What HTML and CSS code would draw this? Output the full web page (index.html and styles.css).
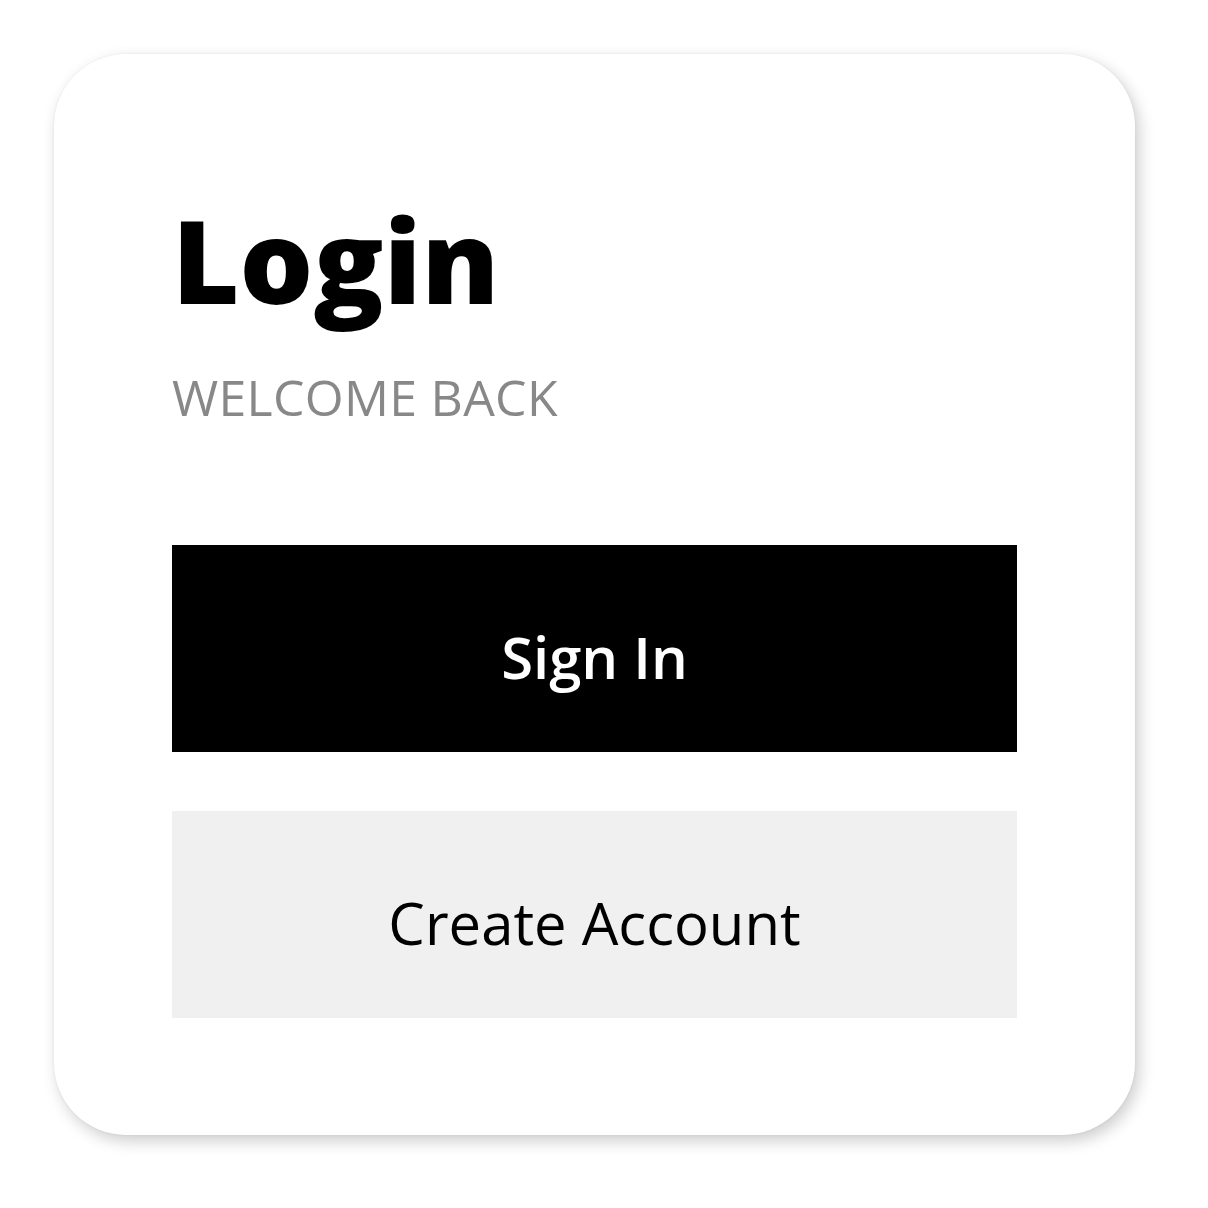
FILE: index.html
```html
<!DOCTYPE html>
<html lang="en">
<head>
<meta charset="utf-8">
<title>Login</title>
<link rel="stylesheet" href="styles.css">
</head>
<body>
<main class="card">
  <h1 class="title">Login</h1>
  <p class="subtitle">WELCOME BACK</p>
  <div class="actions">
    <button class="btn btn-primary" type="button">Sign In</button>
    <button class="btn btn-secondary" type="button">Create Account</button>
  </div>
</main>
</body>
</html>
```
FILE: styles.css
```css
html, body {
  margin: 0;
  padding: 0;
  background: #ffffff;
}

body {
  min-height: 1208px;
  box-sizing: border-box;
  padding: 54px 0 0 54px;
  font-family: "Open Sans", "Noto Sans", sans-serif;
}

.card {
  box-sizing: border-box;
  width: 1081px;
  height: 1081px;
  padding: 148px 118px 0 118px;
  background: #ffffff;
  border-radius: 72px;
  box-shadow: 4px 6px 16px rgba(0, 0, 0, 0.2), 0 0 3px rgba(0, 0, 0, 0.06);
}

.title {
  margin: 0;
  font-size: 116px;
  line-height: 115px;
  font-weight: 800;
  color: #000000;
}

.subtitle {
  margin: 55px 0 0 0;
  font-size: 50px;
  line-height: 50px;
  font-weight: 400;
  color: #888888;
  letter-spacing: 0.3px;
}

.actions {
  margin-top: 123px;
  display: flex;
  flex-direction: column;
  gap: 59px;
}

.btn {
  box-sizing: border-box;
  display: block;
  width: 100%;
  height: 207px;
  padding: 83px 0 66px 0;
  border: none;
  border-radius: 0;
  font-family: "Open Sans", "Noto Sans", sans-serif;
  font-size: 58px;
  line-height: 58px;
  text-align: center;
  cursor: pointer;
}

.btn-primary {
  background: #000000;
  color: #ffffff;
  font-weight: 600;
}

.btn-secondary {
  background: #f0f0f0;
  color: #000000;
  font-weight: 400;
}
```
